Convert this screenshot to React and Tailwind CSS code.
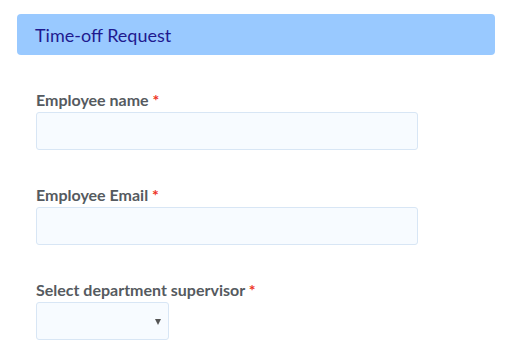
import React from 'react';

function Field({ label, children }) {
  return (
    <div className="flex flex-col">
      <label className="text-[16px] font-bold leading-[19px] text-[#555a60] mb-[3px]">
        {label} <span className="text-[#e32]">*</span>
      </label>
      {children}
    </div>
  );
}

export default function App() {
  return (
    <div className="bg-white w-[515px] h-[357px] pt-[14px] pl-[17px] pr-[20px]" style={{ fontFamily: 'Lato, "Open Sans", sans-serif' }}>
      <div className="h-[41px] bg-[#99c9ff] rounded-[4px] flex items-center px-[18px]">
        <h1 className="text-[18px] text-[#1f1a8f] leading-none">Time-off Request</h1>
      </div>
      <form className="pl-[19px] pt-[35px] flex flex-col gap-[35px]">
        <Field label="Employee name">
          <input type="text" className="w-[382px] h-[38px] bg-[#f7fbff] border border-[#d8e6f5] rounded-[3px] outline-none" />
        </Field>
        <Field label="Employee Email">
          <input type="text" className="w-[382px] h-[38px] bg-[#f7fbff] border border-[#d8e6f5] rounded-[3px] outline-none" />
        </Field>
        <Field label="Select department supervisor">
          <div className="relative w-[133px] h-[38px] bg-[#f7fbff] border border-[#d8e6f5] rounded-[3px]">
            <span className="absolute right-[7px] top-[16px] w-0 h-0 border-l-[3.5px] border-r-[3.5px] border-t-[6px] border-l-transparent border-r-transparent border-t-[#555]" />
          </div>
        </Field>
      </form>
    </div>
  );
}
